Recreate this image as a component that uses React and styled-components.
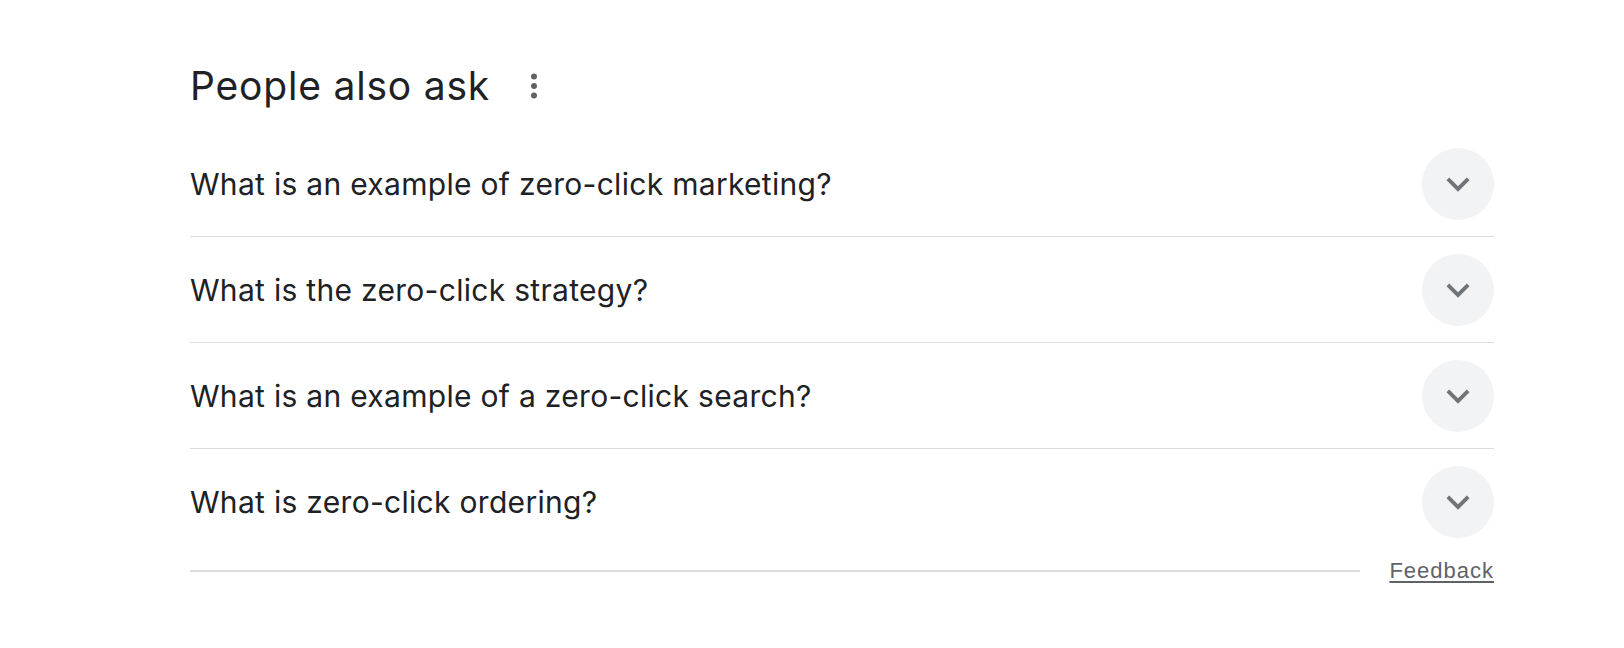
import React from "react";
import styled, { createGlobalStyle } from "styled-components";

const Global = createGlobalStyle`
  body {
    margin: 0;
    background: #fff;
    font-family: Inter, Roboto, "Noto Sans", Arial, sans-serif;
    color: #202124;
  }
`;

const Page = styled.div`
  width: 1304px;
  padding: 62px 0 40px 190px;
`;

const Header = styled.div`
  display: flex;
  align-items: center;
  gap: 30px;
  height: 48px;
  margin-bottom: 21px;
`;

const Title = styled.h2`
  margin: 0;
  font-size: 39px;
  line-height: 48px;
  font-weight: 400;
  letter-spacing: 0.8px;
  color: #202124;
`;

const MenuButton = styled.div`
  display: flex;
  align-items: center;
  justify-content: center;
  width: 28px;
  height: 48px;
  color: #5f6368;
`;

const Question = styled.div`
  display: flex;
  align-items: center;
  justify-content: space-between;
  height: 105px;
  border-bottom: ${(p) => (p.$last ? "none" : "1px solid #dadce0")};
`;

const QuestionText = styled.span`
  font-size: 30px;
  line-height: 40px;
  letter-spacing: 0.3px;
  color: #202124;
`;

const ExpandButton = styled.div`
  display: flex;
  align-items: center;
  justify-content: center;
  width: 72px;
  height: 72px;
  border-radius: 50%;
  background: #f1f3f4;
  color: #70757a;
`;

const Footer = styled.div`
  display: flex;
  align-items: center;
  gap: 29px;
  height: 28px;
  padding-top: 3px;
`;

const Rule = styled.div`
  flex: 1;
  height: 2px;
  background: #dadce0;
`;

const FeedbackLink = styled.a`
  font-family: "Liberation Sans", Arial, sans-serif;
  font-size: 22px;
  line-height: 28px;
  letter-spacing: 1px;
  color: #5f6368;
  text-decoration: underline;
  text-underline-offset: 3px;
  cursor: pointer;
`;

const questions = [
  "What is an example of zero-click marketing?",
  "What is the zero-click strategy?",
  "What is an example of a zero-click search?",
  "What is zero-click ordering?",
];

const Dots = () => (
  <svg width="10" height="30" viewBox="0 0 10 30" fill="currentColor">
    <circle cx="5" cy="5.5" r="3" />
    <circle cx="5" cy="15" r="3" />
    <circle cx="5" cy="24.5" r="3" />
  </svg>
);

const Chevron = () => (
  <svg width="46" height="46" viewBox="0 0 24 24" fill="currentColor">
    <path d="M16.59 8.59L12 13.17 7.41 8.59 6 10l6 6 6-6z" />
  </svg>
);

export default function App() {
  return (
    <Page>
      <Global />
      <Header>
        <Title>People also ask</Title>
        <MenuButton>
          <Dots />
        </MenuButton>
      </Header>
      {questions.map((q, i) => (
        <Question key={q} $last={i === questions.length - 1}>
          <QuestionText>{q}</QuestionText>
          <ExpandButton>
            <Chevron />
          </ExpandButton>
        </Question>
      ))}
      <Footer>
        <Rule />
        <FeedbackLink>Feedback</FeedbackLink>
      </Footer>
    </Page>
  );
}
